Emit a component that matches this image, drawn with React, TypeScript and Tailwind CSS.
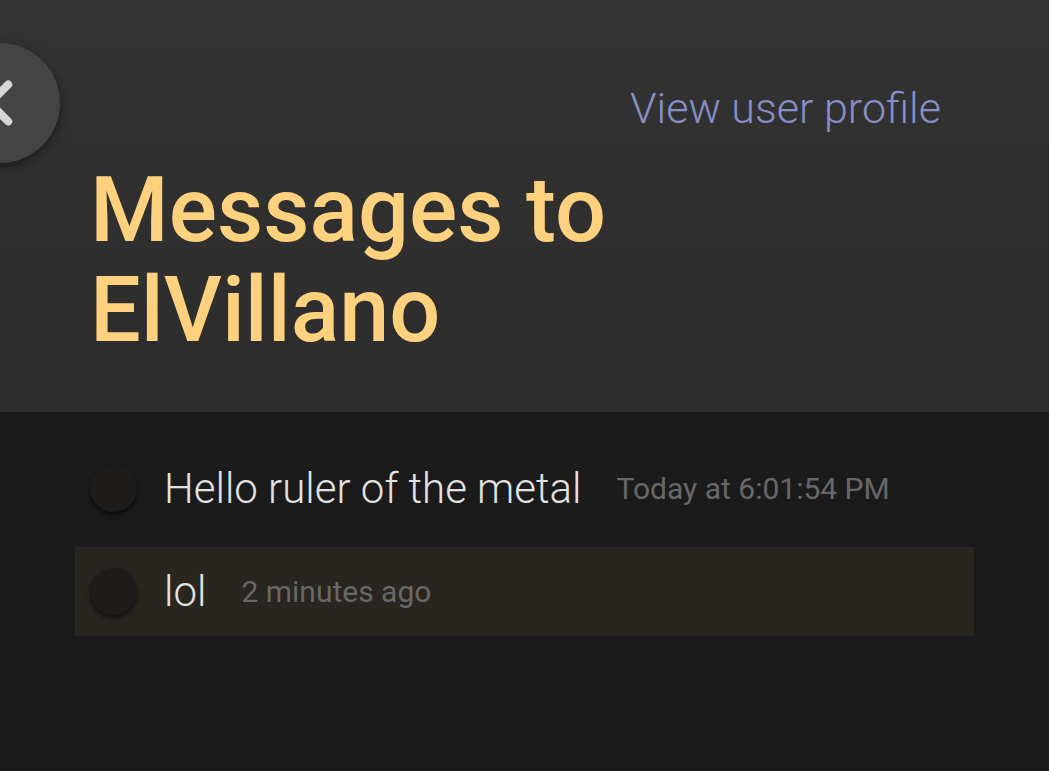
import { ChevronLeft } from "lucide-react";

const roboto = { fontFamily: "Roboto, 'Noto Sans', sans-serif" };

const messages = [
  { text: "Hello ruler of the metal", time: "Today at 6:01:54 PM", unread: false },
  { text: "lol", time: "2 minutes ago", unread: true },
];

export default function App() {
  return (
    <div className="relative w-[1049px] h-[771px] overflow-hidden bg-[#1b1b1b]" style={roboto}>
      <header className="relative h-[412px] bg-gradient-to-b from-[#333333] to-[#2c2c2c] pt-[83px]">
        <button className="absolute left-[-60px] top-[43px] h-[120px] w-[120px] rounded-full bg-[#444444] shadow-[0_4px_12px_rgba(0,0,0,0.45)]">
          <ChevronLeft className="absolute left-[22px] top-[23px] h-[74px] w-[74px] text-[#d6d6d6]" strokeWidth={2.6} />
        </button>
        <div className="flex justify-end pr-[108px]">
          <a className="text-[43px] font-light leading-[51px] text-[#8690c7]">View user profile</a>
        </div>
        <h1 className="mt-[27px] pl-[90px] text-[90px] font-medium leading-[100px] text-[#fed17e]">
          Messages to
          <br />
          ElVillano
        </h1>
      </header>

      <main className="flex flex-col gap-[14px] px-[75px] pt-[32px]">
        {messages.map((m) => (
          <div
            key={m.text}
            className={`flex h-[89px] items-center pl-[15px] ${m.unread ? "bg-[#29251f]" : ""}`}
          >
            <div className="h-[47px] w-[47px] shrink-0 rounded-full bg-[#1d1c1a] shadow-[0_3px_4px_rgba(0,0,0,0.55)]" />
            <span className="ml-[27px] text-[42px] font-light leading-none text-[#e2e2e2]">{m.text}</span>
            <span className="ml-[35px] text-[30px] leading-none text-[#686868]">{m.time}</span>
          </div>
        ))}
      </main>
    </div>
  );
}
